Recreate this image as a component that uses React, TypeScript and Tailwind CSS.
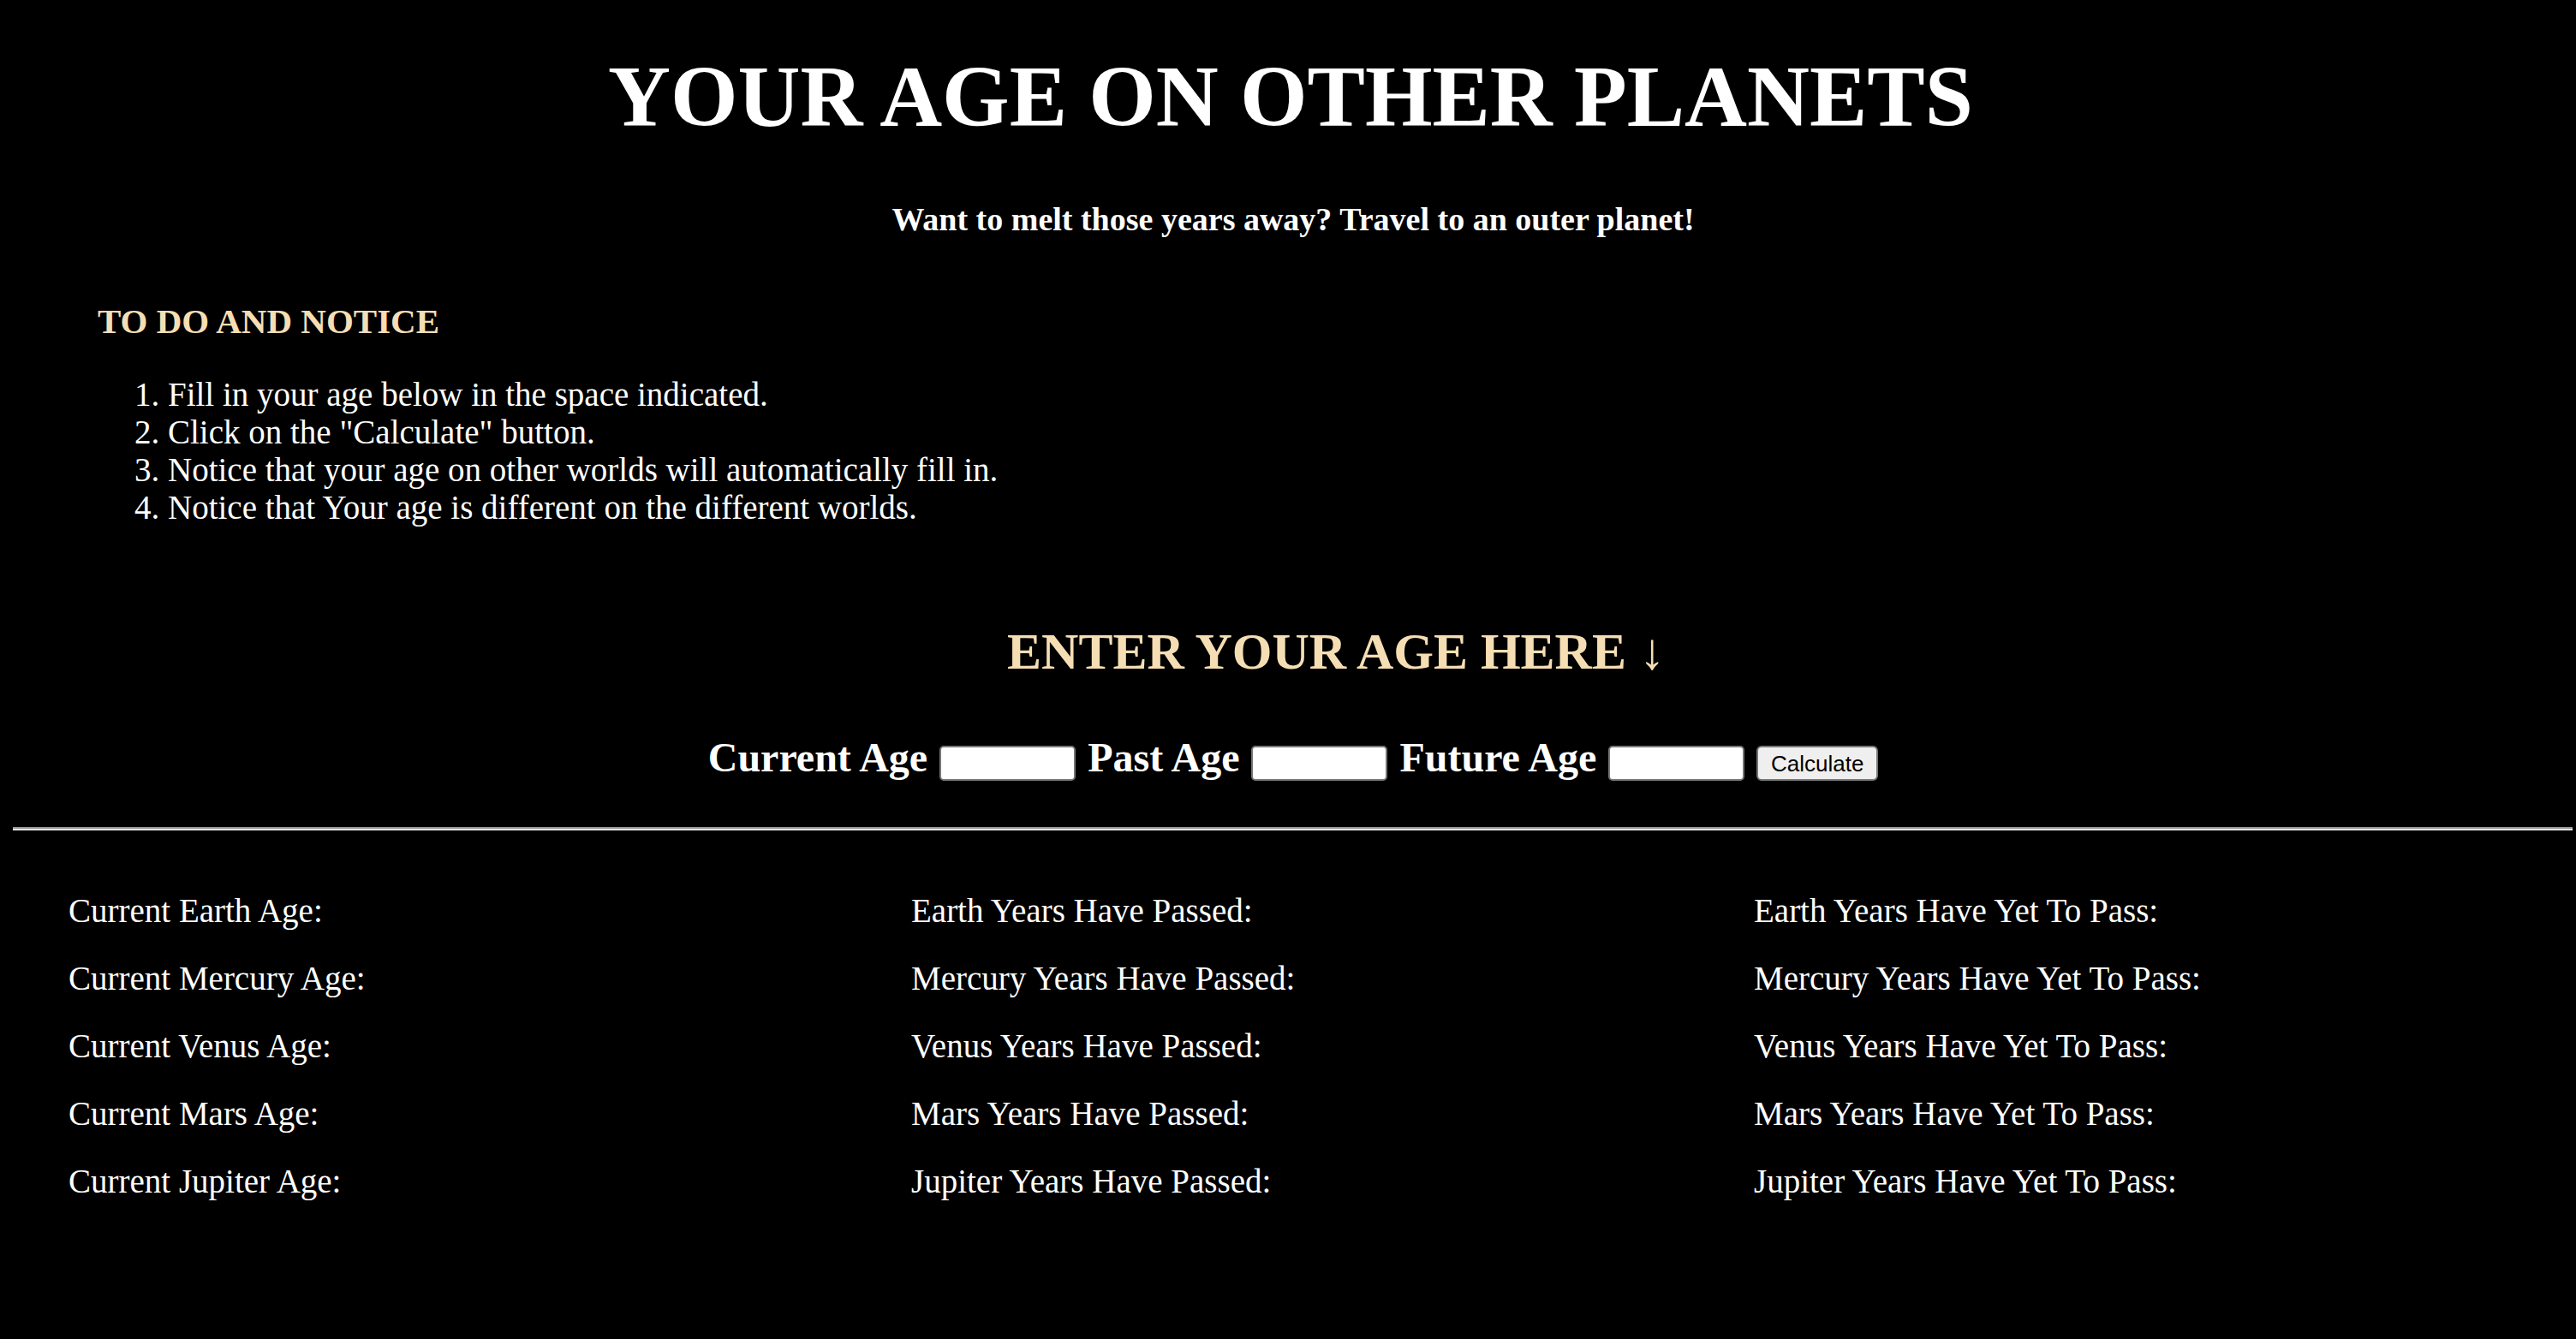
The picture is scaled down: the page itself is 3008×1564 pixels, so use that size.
import React from "react";

const serif = { fontFamily: '"Liberation Serif", "Times New Roman", serif' };

const col1 = ["Earth", "Mercury", "Venus", "Mars", "Jupiter"];

export default function App() {
  return (
    <div className="min-h-screen w-full bg-black text-white" style={serif}>
      <h1 className="pt-[53px] pl-[6px] text-center text-[101px] leading-[120px] font-bold">
        YOUR AGE ON OTHER PLANETS
      </h1>
      <h4 className="mt-[60px] pl-[12px] text-center text-[38px] leading-[46px] font-bold">
        Want to melt those years away? Travel to an outer planet!
      </h4>
      <h3 className="mt-[72px] pl-[114px] text-[41px] leading-[48px] font-bold text-[#f5deb3]">
        TO DO AND NOTICE
      </h3>
      <ol className="mt-[40px] pl-[157px] text-[39px] leading-[44px] list-none">
        <li>1. Fill in your age below in the space indicated.</li>
        <li>2. Click on the "Calculate" button.</li>
        <li>3. Notice that your age on other worlds will automatically fill in.</li>
        <li>4. Notice that Your age is different on the different worlds.</li>
      </ol>
      <h2 className="mt-[111px] pl-[112px] text-center text-[60px] leading-[70px] font-bold text-[#f5deb3]">
        ENTER YOUR AGE HERE ↓
      </h2>
      <div className="mt-[61px] pl-[12px] flex items-end justify-center gap-[14px] text-[48px] leading-[56px] font-bold">
        <label>Current Age</label>
        <input className="mb-[1px] h-[41px] w-[159px] rounded-[5px] border-2 border-[#767676] bg-white" type="text" />
        <label>Past Age</label>
        <input className="mb-[1px] h-[41px] w-[159px] rounded-[5px] border-2 border-[#767676] bg-white" type="text" />
        <label>Future Age</label>
        <input className="mb-[1px] h-[41px] w-[159px] rounded-[5px] border-2 border-[#767676] bg-white" type="text" />
        <button
          className="mb-[1px] h-[41px] w-[142px] rounded-[6px] border-2 border-[#767676] bg-[#efefef] text-[26px] leading-[30px] font-normal text-black"
          style={{ fontFamily: '"Liberation Sans", Arial, sans-serif' }}
        >
          Calculate
        </button>
      </div>
      <div className="mt-[53px] ml-[15px] mr-[4px] h-[4px] border-t-2 border-b-2 border-t-[#9a9a9a] border-b-[#e4e4e4]" />
      <div className="mt-[54px] pl-[80px] grid grid-cols-[984px_984px_944px] text-[39px] leading-[79px]">
        <div className="flex flex-col">
          {col1.map((p) => (
            <div key={p}>Current {p} Age:</div>
          ))}
        </div>
        <div className="flex flex-col">
          {col1.map((p) => (
            <div key={p}>{p} Years Have Passed:</div>
          ))}
        </div>
        <div className="flex flex-col">
          {col1.map((p) => (
            <div key={p}>{p} Years Have Yet To Pass:</div>
          ))}
        </div>
      </div>
    </div>
  );
}
